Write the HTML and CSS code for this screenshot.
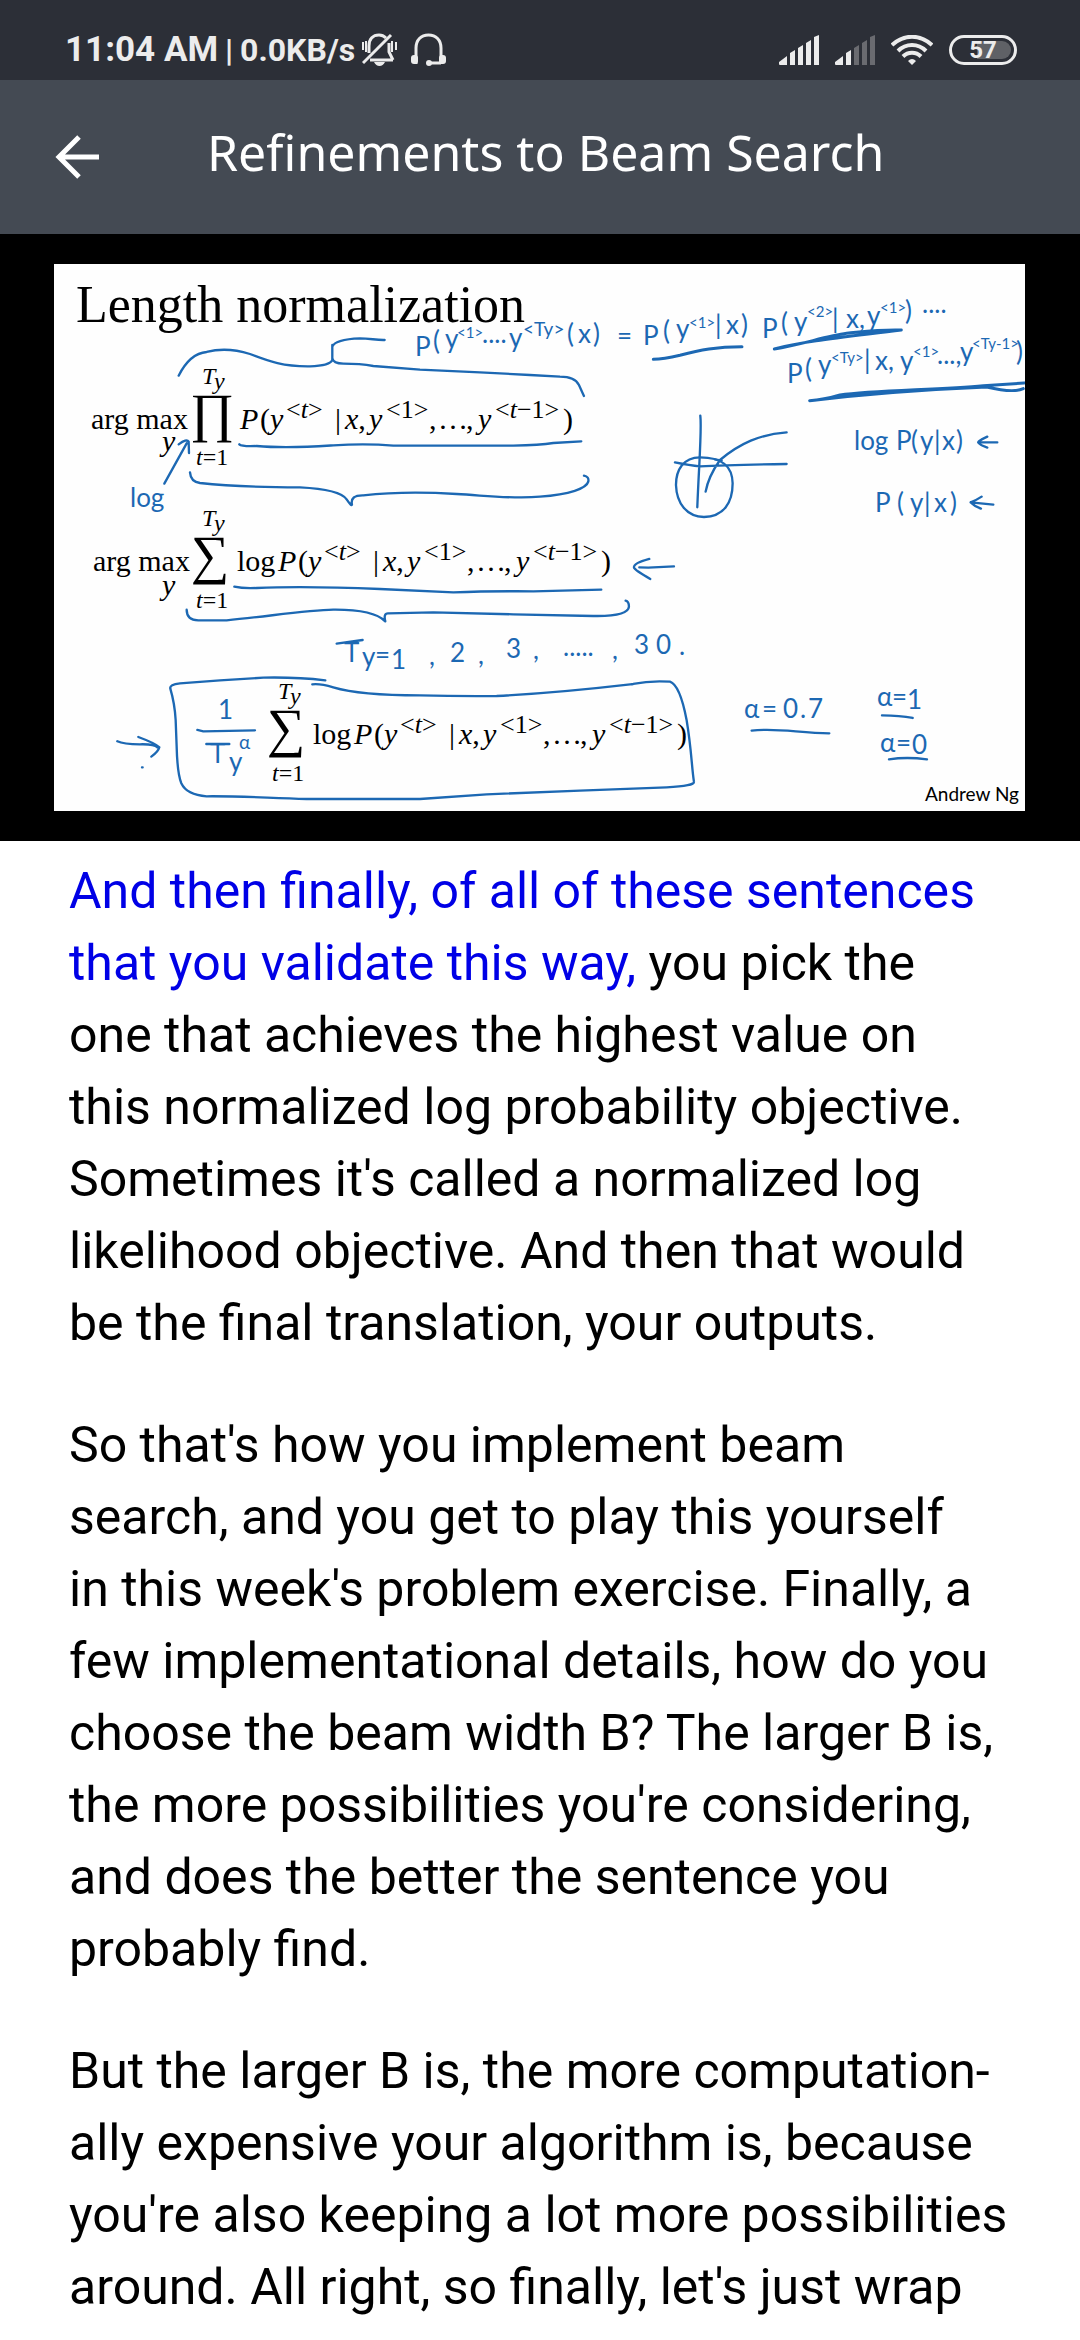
FILE: index.html
```
<!DOCTYPE html>
<html lang="en">
<head>
<meta charset="utf-8">
<meta name="viewport" content="width=device-width, initial-scale=1">
<title>Refinements to Beam Search</title>
<link rel="stylesheet" href="styles.css">
</head>
<body>
<div class="status">
  <div class="status-left">
    <span class="clock">11:04 AM</span>
    <span class="rate">|</span>
    <span class="rate">0.0KB/s</span>
    <svg class="status-icon" width="35" height="34" viewBox="0 0 35 34" aria-hidden="true">
      <g fill="none" stroke="currentColor" stroke-width="2">
        <path d="M7 20V13C7 6 11 2 17 2c3 0 5 1 7 3M27 10v9l4 8M8 27h23" stroke-width="3"/>
        <path d="M1 30 29 2" stroke-width="3"/>
        <path d="M1 9v8M4 8v11M30 8v11M34 9v8"/>
      </g>
      <path d="M12 29h11q-2 4-5.500 4T12 29z" fill="currentColor"/>
    </svg>
    <svg class="status-icon headset" width="35" height="34" viewBox="0 0 35 34" aria-hidden="true">
      <path d="M5 31V15C5 7 10 2 17.500 2S30 7 30 15v16M18 30h12" fill="none" stroke="currentColor" stroke-width="3"/>
      <rect x="0" y="22" width="7" height="9" rx="3" fill="currentColor"/>
      <rect x="28" y="22" width="7" height="9" rx="3" fill="currentColor"/>
      <circle cx="18" cy="30" r="3" fill="currentColor"/>
    </svg>
  </div>
  <div class="status-right">
    <svg width="40" height="30" viewBox="0 0 40 30" aria-hidden="true">
      <path d="M0 27 8 21v9H1q-1 0-1-1zM11 18l5-3v15h-5zM19 13l5-3v20h-5zM27 8l5-3v25h-5zM35 2l5-2v30h-5z" fill="currentColor"/>
    </svg>
    <svg width="40" height="30" viewBox="0 0 40 30" aria-hidden="true">
      <path d="M0 27 8 21v9H1q-1 0-1-1zM11 18l5-3v15h-5z" fill="currentColor"/>
      <path class="dim" d="M19 13l5-3v20h-5zM27 8l5-3v25h-5zM35 2l5-2v30h-5z"/>
    </svg>
    <svg width="42" height="30" viewBox="0 0 42 30" aria-hidden="true">
      <path d="M1 10C13 -1 29 -1 41 10M7 16c8-8 20-8 28 0M12 21.500c5-5 13-5 18 0" fill="none" stroke="currentColor" stroke-width="4"/>
      <path d="M21 30l-4-4q4-4 8 0z" fill="currentColor"/>
    </svg>
    <span class="battery">57</span>
  </div>
</div>

<header class="bar">
  <button class="back" type="button" aria-label="Back">
    <svg width="44" height="44" viewBox="0 0 44 44" aria-hidden="true">
      <path d="M44 22H4M24 2 4 22l20 20" fill="none" stroke="currentColor" stroke-width="5"/>
    </svg>
  </button>
  <h1 class="title">Refinements to Beam Search</h1>
</header>

<figure class="video">
  <svg class="slide" viewBox="54 264 971 547" role="img" aria-label="Length normalization slide">
    <rect class="paper" x="54" y="264" width="971" height="547"/>
    <text class="heading" x="76" y="322">Length normalization</text>

    <!-- product of probabilities -->
    <g class="math">
      <text x="91" y="429">arg max</text>
      <text class="it" x="162" y="451">y</text>
      <text class="lim it" x="202" y="384">T<tspan x="214" y="389">y</tspan></text>
      <text class="op" x="190" y="431">∏</text>
      <text class="lim" x="196" y="465"><tspan class="it">t</tspan>=1</text>
      <text y="429"><tspan class="it" x="240">P</tspan><tspan x="260">(</tspan><tspan class="it" x="270">y</tspan><tspan class="sup" x="286" y="418">&lt;<tspan class="it">t</tspan>&gt;</tspan><tspan x="335" y="429">|</tspan><tspan class="it" x="345">x</tspan>,<tspan class="it" x="369">y</tspan><tspan class="sup" x="386" y="418">&lt;1&gt;</tspan><tspan x="429" y="429">,</tspan><tspan x="438">…</tspan><tspan x="466">,</tspan><tspan class="it" x="478">y</tspan><tspan class="sup" x="495" y="418">&lt;<tspan class="it">t</tspan>−1&gt;</tspan><tspan x="563" y="429">)</tspan></text>
    </g>
    <!-- sum of log probabilities -->
    <g class="math">
      <text x="93" y="571">arg max</text>
      <text class="it" x="162" y="595">y</text>
      <text class="lim it" x="202" y="526">T<tspan x="214" y="531">y</tspan></text>
      <text class="op" x="191" y="573">∑</text>
      <text class="lim" x="196" y="608"><tspan class="it">t</tspan>=1</text>
      <text y="571"><tspan x="237">log</tspan><tspan class="it" x="278">P</tspan><tspan x="298">(</tspan><tspan class="it" x="308">y</tspan><tspan class="sup" x="324" y="560">&lt;<tspan class="it">t</tspan>&gt;</tspan><tspan x="373" y="571">|</tspan><tspan class="it" x="383">x</tspan>,<tspan class="it" x="407">y</tspan><tspan class="sup" x="424" y="560">&lt;1&gt;</tspan><tspan x="467" y="571">,</tspan><tspan x="476">…</tspan><tspan x="504">,</tspan><tspan class="it" x="516">y</tspan><tspan class="sup" x="533" y="560">&lt;<tspan class="it">t</tspan>−1&gt;</tspan><tspan x="601" y="571">)</tspan></text>
    </g>
    <!-- length-normalized sum -->
    <g class="math">
      <text class="lim it" x="278" y="699">T<tspan x="290" y="704">y</tspan></text>
      <text class="op" x="267" y="746">∑</text>
      <text class="lim" x="272" y="781"><tspan class="it">t</tspan>=1</text>
      <text y="744"><tspan x="313">log</tspan><tspan class="it" x="354">P</tspan><tspan x="374">(</tspan><tspan class="it" x="384">y</tspan><tspan class="sup" x="400" y="733">&lt;<tspan class="it">t</tspan>&gt;</tspan><tspan x="449" y="744">|</tspan><tspan class="it" x="459">x</tspan>,<tspan class="it" x="483">y</tspan><tspan class="sup" x="500" y="733">&lt;1&gt;</tspan><tspan x="543" y="744">,</tspan><tspan x="552">…</tspan><tspan x="580">,</tspan><tspan class="it" x="592">y</tspan><tspan class="sup" x="609" y="733">&lt;<tspan class="it">t</tspan>−1&gt;</tspan><tspan x="677" y="744">)</tspan></text>
    </g>
    <text class="author" x="925" y="801">Andrew Ng</text>

    <!-- handwritten notes -->
    <g class="hand">
      <text><tspan x="415" y="356">P</tspan><tspan x="433" y="350">(</tspan><tspan x="445" y="348">y</tspan><tspan class="tiny" x="457" y="338">&lt;1&gt;</tspan><tspan x="482" y="343">....</tspan><tspan x="509" y="347">y</tspan><tspan class="small" x="523" y="336">&lt;Ty&gt;</tspan><tspan x="567" y="343">(</tspan><tspan x="578" y="343">x</tspan><tspan x="593" y="343">)</tspan></text>
      <text x="617" y="345">=</text>
      <text><tspan x="643" y="345">P</tspan><tspan x="663" y="340">(</tspan><tspan x="676" y="338">y</tspan><tspan class="tiny" x="689" y="328">&lt;1&gt;</tspan><tspan x="715" y="334">|</tspan><tspan x="726" y="334">x</tspan><tspan x="741" y="334">)</tspan></text>
      <text><tspan x="762" y="338">P</tspan><tspan x="781" y="332">(</tspan><tspan x="794" y="331">y</tspan><tspan class="tiny" x="807" y="317">&lt;2&gt;</tspan><tspan x="832" y="328">|</tspan><tspan x="846" y="328">x,</tspan><tspan x="867" y="325">y</tspan><tspan class="tiny" x="880" y="313">&lt;1&gt;</tspan><tspan x="905" y="320">)</tspan><tspan x="922" y="313">....</tspan></text>
      <text><tspan x="787" y="383">P</tspan><tspan x="805" y="378">(</tspan><tspan x="818" y="374">y</tspan><tspan class="tiny" x="831" y="363">&lt;Ty&gt;</tspan><tspan x="864" y="369">|</tspan><tspan x="875" y="370">x,</tspan><tspan x="900" y="370">y</tspan><tspan class="tiny" x="913" y="357">&lt;1&gt;</tspan><tspan x="937" y="364">...,</tspan><tspan x="960" y="361">y</tspan><tspan class="tiny" x="972" y="349">&lt;Ty-1&gt;</tspan><tspan x="1016" y="361">)</tspan></text>
      <text y="450"><tspan x="854">log</tspan><tspan x="896">P</tspan><tspan x="911">(</tspan><tspan x="920">y</tspan><tspan x="934">|</tspan><tspan x="942">x</tspan><tspan x="956">)</tspan></text>
      <text y="512"><tspan x="875">P</tspan><tspan x="897">(</tspan><tspan x="910">y</tspan><tspan x="924">|</tspan><tspan x="934">x</tspan><tspan x="950">)</tspan></text>
      <text x="130" y="507">log</text>
      <text><tspan x="344" y="662">T</tspan><tspan x="362" y="666">y</tspan><tspan x="375" y="664">=</tspan><tspan x="391" y="669">1</tspan><tspan x="429" y="665">,</tspan><tspan x="450" y="662">2</tspan><tspan x="478" y="664">,</tspan><tspan x="506" y="658">3</tspan><tspan x="533" y="659">,</tspan><tspan x="563" y="656">.....</tspan><tspan x="612" y="659">,</tspan><tspan x="634" y="654">3</tspan><tspan x="656" y="654">0</tspan><tspan x="679" y="655">.</tspan></text>
      <text><tspan x="218" y="719">1</tspan><tspan x="210" y="763">T</tspan><tspan x="229" y="771">y</tspan><tspan class="small" x="239" y="749">α</tspan></text>
      <text><tspan x="744" y="718">α</tspan><tspan x="762" y="718">=</tspan><tspan x="783" y="718">0</tspan><tspan x="800" y="718">.</tspan><tspan x="808" y="718">7</tspan></text>
      <text><tspan x="877" y="706">α</tspan><tspan x="892" y="706">=</tspan><tspan x="907" y="709">1</tspan></text>
      <text><tspan x="880" y="752">α</tspan><tspan x="896" y="752">=</tspan><tspan x="912" y="754">0</tspan></text>
    </g>

    <!-- braces, underlines, arrows and the small plot -->
    <g class="ink">
      <g transform="translate(40 250) scale(.3333)">
        <path d="M416 377Q450 310 500 306Q560 290 630 312C690 335 730 350 810 349Q870 347 877 330V285M877 290Q885 268 960 265C990 265 1010 271 1034 270M877 325Q880 341 910 341Q960 341 1000 348L1140 359L1320 367L1470 375L1560 380Q1605 380 1617 405L1632 438"/>
        <path d="M598 583Q605 590 650 588C740 596 820 590 880 586Q980 580 1060 587H1420Q1500 585 1540 579L1624 574"/>
        <path d="M373 701 440 580M416 583Q440 565 446 575L447 609"/>
        <path d="M450 667Q452 695 480 699C560 708 640 712 780 712Q900 718 920 748Q935 770 936 764Q930 735 970 736C1060 726 1170 727 1250 732C1340 737 1420 748 1500 740C1590 733 1640 715 1645 695Q1648 680 1632 677"/>
      </g>
      <g transform="translate(380 250) scale(.3333)">
        <path class="bold" d="M820 328Q850 328 900 316C960 300 1010 290 1086 290"/>
        <path d="M961 497C966 540 957 640 952 772M885 637Q930 646 960 649C1020 646 1100 644 1220 642M977 725Q985 680 1020 630C1080 580 1140 553 1220 547M1005 628 1025 632"/>
        <path d="M960 622C910 622 888 660 888 705C890 760 920 800 972 801C1030 800 1058 760 1058 700C1057 650 1030 622 960 622"/>
      </g>
      <g transform="translate(700 250) scale(.3333)">
        <path class="bold" d="M223 297C300 285 380 258 440 250C500 244 540 238 604 240M223 297C320 272 430 262 604 240"/>
        <path class="bold" d="M329 452Q370 450 420 435C520 420 720 420 850 407L973 399M329 452C430 440 640 420 860 411Q940 430 970 416"/>
        <path d="M892 577H835M862 560Q832 574 835 578Q840 585 862 593M880 764Q840 760 812 757Q830 750 845 740M812 757Q825 770 843 776"/>
      </g>
      <g transform="translate(40 500) scale(.3333)">
        <path d="M583 260Q610 266 650 264C780 258 900 262 1020 267L1240 277Q1350 273 1480 274L1684 269"/>
        <path d="M440 329Q440 360 475 361H560C680 350 800 330 880 329Q1000 328 1036 364Q1030 340 1044 340L1180 337L1420 343L1660 348Q1765 350 1767 320Q1767 304 1757 302"/>
        <path d="M890 431 968 420"/>
        <path d="M856 541Q770 531 670 533L540 541L420 550Q388 553 391 566Q404 610 407 660L410 740Q412 820 424 850Q440 885 500 889C620 888 690 895 800 897H1140L1340 883L1620 872L1880 862Q1965 858 1962 845C1955 800 1955 750 1940 660Q1920 555 1890 545Q1830 541 1780 552C1660 566 1560 578 1370 588Q1250 589 1140 586C1050 586 940 580 880 562Q840 550 817 553"/>
        <path d="M472 690 490 694 645 691M499 732H568M232 724Q250 733 300 733Q345 732 352 742M295 711C330 724 350 733 358 742Q355 755 334 770M306 802h2"/>
      </g>
      <g transform="translate(380 500) scale(.3333)">
        <path d="M882 199 805 203 778 202M808 177Q760 190 762 203Q764 210 811 237"/>
      </g>
      <g transform="translate(700 500) scale(.3333)">
        <path d="M155 692C230 682 300 700 388 700M546 646Q600 646 638 654M567 778Q620 770 681 778"/>
      </g>
    </g>
  </svg>
</figure>

<main class="transcript">
  <p><a class="current" href="#now">And then finally, of all of these sentences<br>that you validate this way,</a> you pick the<br>one that achieves the highest value on<br>this normalized log probability objective.<br>Sometimes it's called a normalized log<br>likelihood objective. And then that would<br>be the final translation, your outputs.</p>
  <p>So that's how you implement beam<br>search, and you get to play this yourself<br>in this week's problem exercise. Finally, a<br>few implementational details, how do you<br>choose the beam width B? The larger B is,<br>the more possibilities you're considering,<br>and does the better the sentence you<br>probably find.</p>
  <p>But the larger B is, the more computation-<br>ally expensive your algorithm is, because<br>you're also keeping a lot more possibilities<br>around. All right, so finally, let's just wrap</p>
</main>
</body>
</html>
```
FILE: styles.css
```
* {
  box-sizing: border-box;
}

body {
  margin: 0;
  background: #fff;
  color: #000;
  font-family: Roboto, sans-serif;
}

.status {
  display: flex;
  align-items: center;
  justify-content: space-between;
  height: 80px;
  padding: 20px 63px 0 65px;
  background: #2c2f37;
  color: #ececec;
  font-weight: 700;
}

.status-left {
  display: flex;
  align-items: center;
  gap: 7px;
}

.status-right {
  display: flex;
  align-items: center;
  gap: 16px;
}

.clock {
  font-size: 35px;
  line-height: 40px;
}

.rate {
  font-size: 32px;
  line-height: 40px;
}

.headset {
  margin-left: 7px;
}

.dim {
  fill: #6a6b70;
}

.battery {
  width: 68px;
  height: 30px;
  border: 3px solid #ececec;
  border-radius: 15px;
  background: linear-gradient(90deg, transparent 40%, #5f6166 40%) content-box;
  padding: 3px;
  font-size: 24px;
  line-height: 18px;
  text-align: center;
}

.bar {
  display: flex;
  align-items: center;
  gap: 108px;
  height: 154px;
  padding: 0 55px;
  background: #444a53;
  color: #fff;
}

.back {
  display: flex;
  padding: 0;
  border: 0;
  background: none;
  color: inherit;
}

.title {
  margin: 0;
  padding-bottom: 10px;
  font: 400 50px/68px "Noto Sans", sans-serif;
}

.video {
  margin: 0;
  padding: 30px 55px 30px 54px;
  background: #000;
}

.slide {
  display: block;
  width: 100%;
}

.paper {
  fill: #fefefe;
}

.heading {
  font: 52px "Liberation Serif", serif;
}

.math {
  font: 30px "Liberation Serif", serif;
}

.it {
  font-style: italic;
}

.lim {
  font-size: 24px;
}

.sup {
  font-size: 26px;
}

.op {
  font-size: 54px;
}

.author {
  font: 19px Lato, sans-serif;
}

.hand {
  fill: #1c68b3;
  font: 26px Lato, sans-serif;
}

.small {
  font-size: 19px;
}

.tiny {
  font-size: 15px;
}

.ink {
  fill: none;
  stroke: #1c68b3;
  stroke-width: 7;
  stroke-linecap: round;
  stroke-linejoin: round;
}

.bold {
  stroke-width: 9;
}

.transcript {
  padding: 14px 54px 0 69px;
  font-size: 50px;
  line-height: 72px;
}

.transcript p {
  margin: 0 0 50px;
}

.transcript p:last-child {
  margin-bottom: 0;
}

.current {
  color: #0000e6;
  text-decoration: none;
}
```
